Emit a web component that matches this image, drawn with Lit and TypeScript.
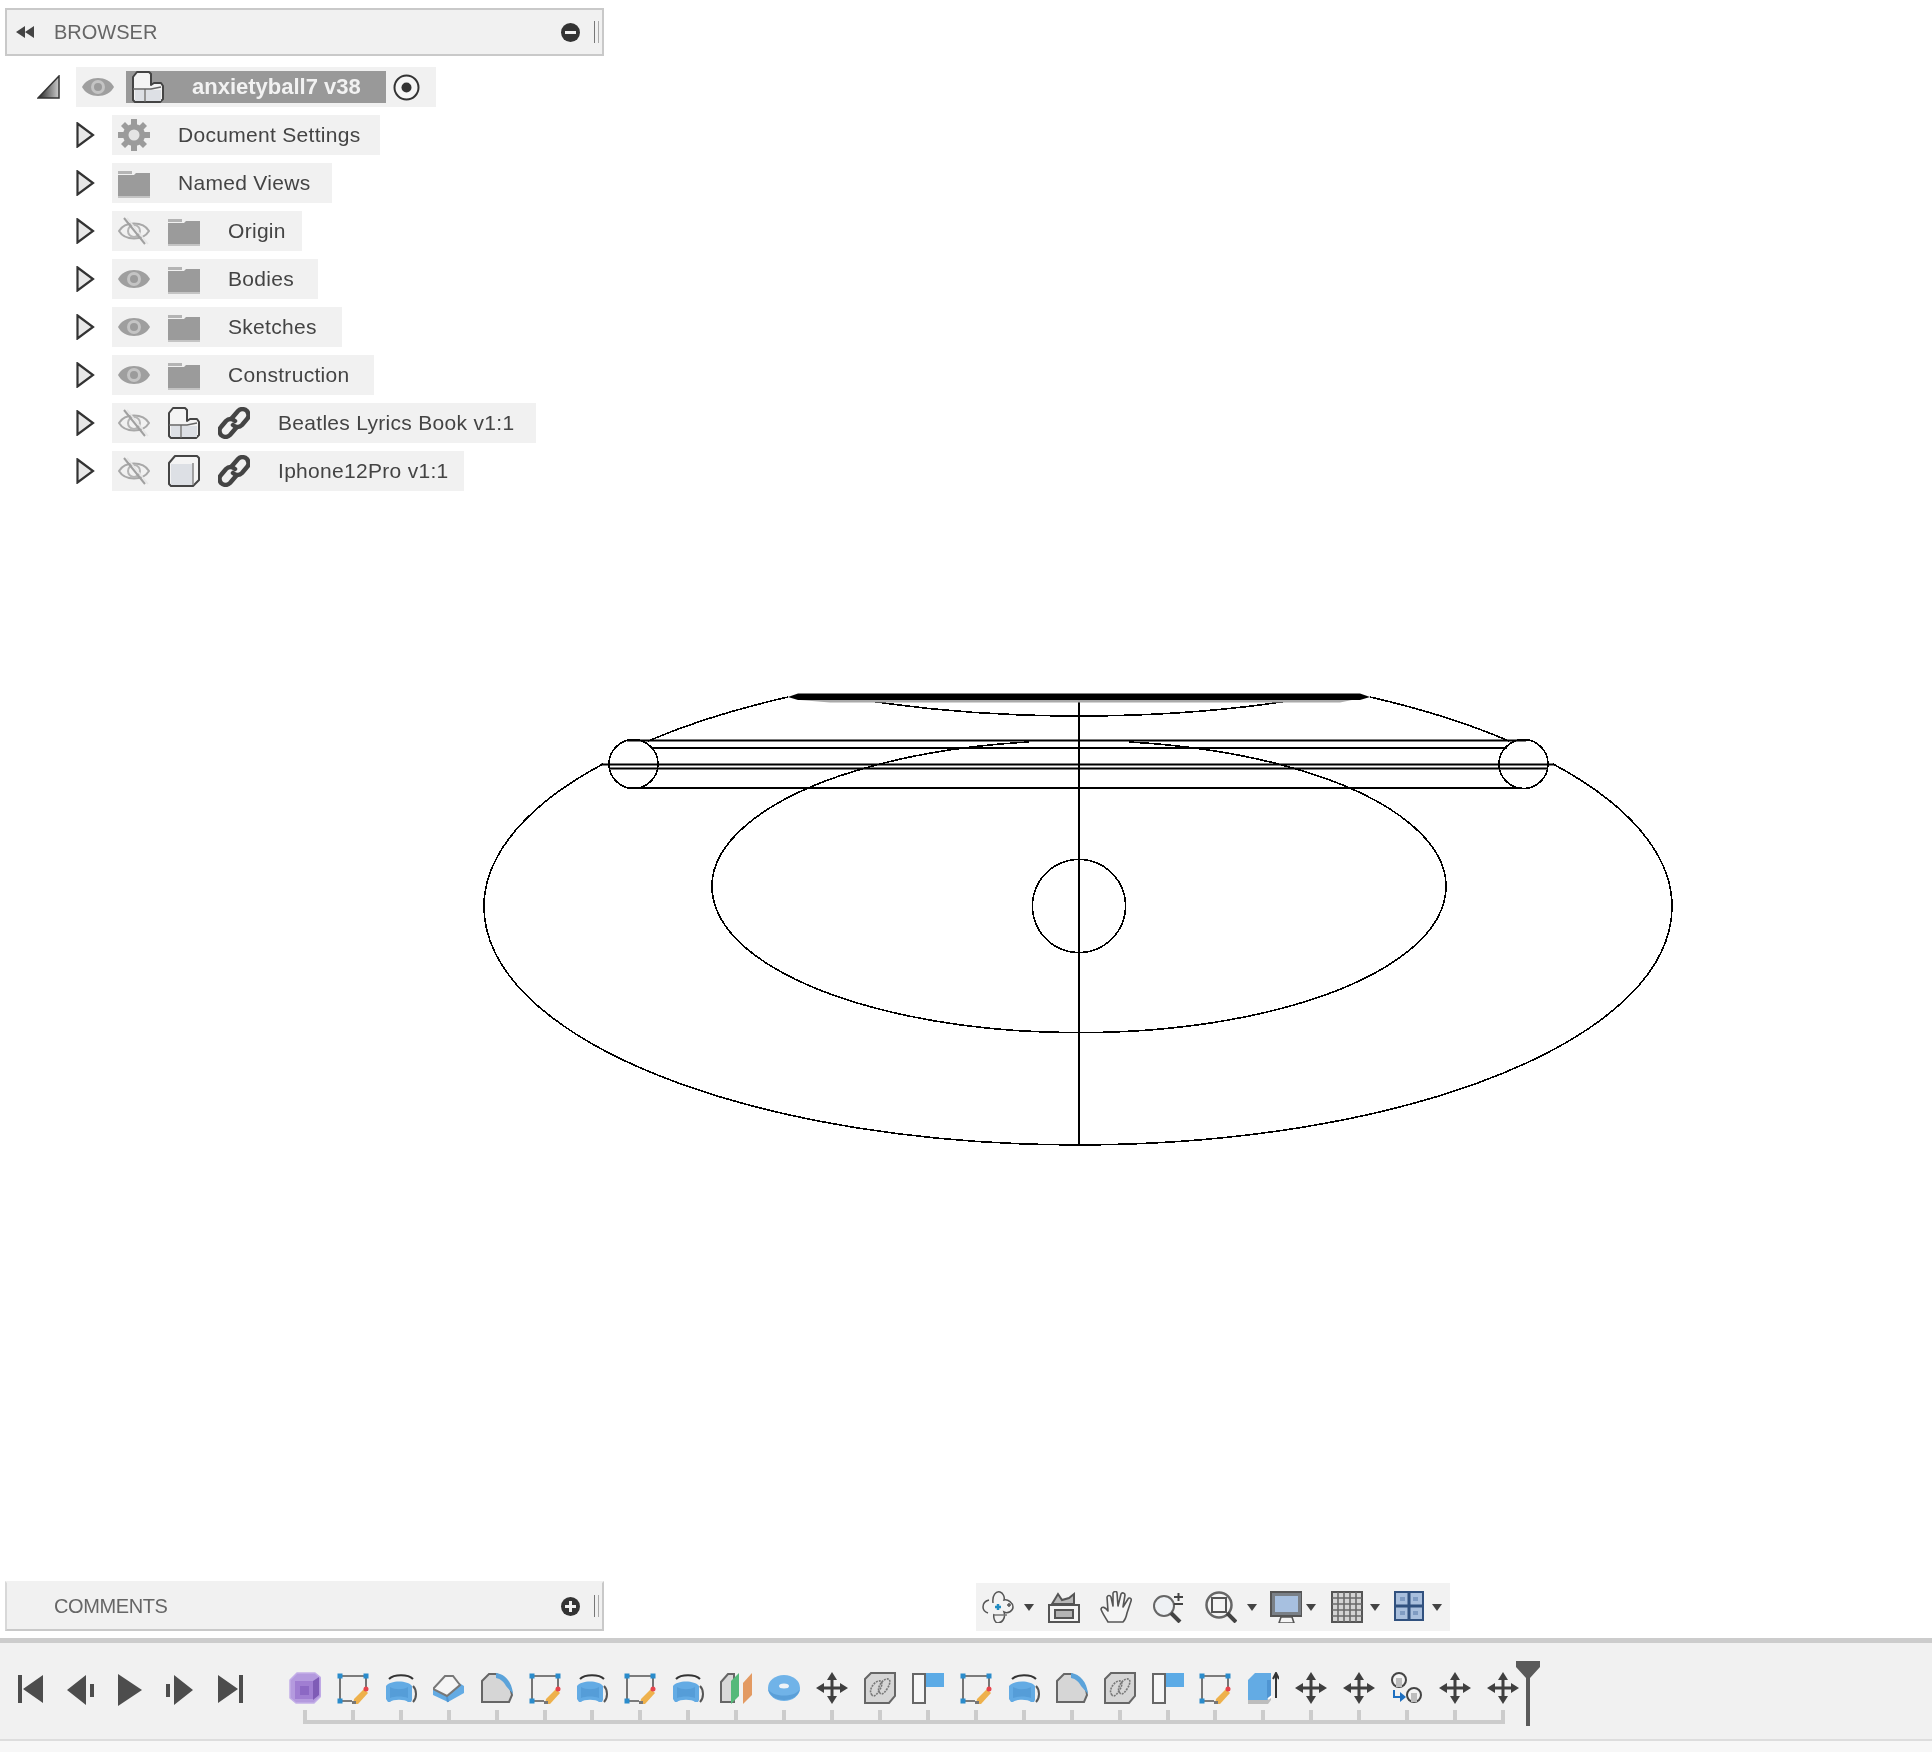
import { LitElement, css, html, svg } from "lit";
import { customElement } from "lit/decorators.js";

const icon = (body: unknown, w = 32, h = 32) =>
  html`<svg class="ico" width=${w} height=${h} viewBox="0 0 ${w} ${h}">${body}</svg>`;

const eye = svg`
  <path d="M0 16C6 4 26 4 32 16C26 28 6 28 0 16Z" fill="#9f9f9f"/>
  <circle cx="16" cy="16" r="7" fill="#c4c4c4"/>
  <circle cx="16" cy="16" r="4" fill="#9b9b9b"/>`;
const eyeOff = svg`
  <path d="M1 16C7 6 25 6 31 16C25 26 7 26 1 16Z" fill="none" stroke="#a8a8a8" stroke-width="2"/>
  <circle cx="16" cy="16" r="6" fill="none" stroke="#b4b4b4" stroke-width="2"/>
  <path d="M6 3L27 29" stroke="#a0a0a0" stroke-width="2"/>
  <path d="M9 3L30 29" stroke="#e6e6e6" stroke-width="1.5"/>`;
const folder = svg`
  <path d="M0 4H14V7H0Z" fill="#b4b4b4"/>
  <path d="M0 8H16L18 6H32V29H0Z" fill="#9b9b9b"/>
  <path d="M0 29H32V31H0Z" fill="#c4c4c4"/>`;
const gear = svg`
  <g fill="#9b9b9b">
    <circle cx="16" cy="16" r="11"/>
    <path d="M13 0H19V7H13ZM13 25H19V32H13ZM0 13H7V19H0ZM25 13H32V19H25Z"/>
    <path d="M3 7L7 3L12 8L8 12ZM25 3L29 7L24 12L20 8ZM3 25L8 20L12 24L7 29ZM24 20L29 25L25 29L20 24Z"/>
  </g>
  <circle cx="16" cy="16" r="5.500" fill="#e4e4e4"/>`;
const assembly = svg`
  <path d="M1 6L5 1H17L19 3V14L22 12H29L31 15V28L28 31H3L1 29Z" fill="#f4f4f4" stroke="#444" stroke-width="2" stroke-linejoin="round"/>
  <path d="M3 19H12V30H3ZM14 19H29V30H14Z" fill="#dde0e5"/>
  <path d="M1 18H19L29 16M13 18V31" fill="none" stroke="#666" stroke-width="1.300"/>`;
const body = svg`
  <path d="M1 8L7 1H29L31 3V25L25 31H3L1 29Z" fill="#f4f4f4" stroke="#444" stroke-width="2" stroke-linejoin="round"/>
  <path d="M3 9H25V30H3Z" fill="#dde0e5"/>
  <path d="M25 8V30" fill="none" stroke="#888" stroke-width="1.500"/>`;
const link = svg`
  <g fill="none" stroke="#444" stroke-width="4.500" stroke-linecap="round">
    <path d="M14 11L20 4C23 1 27 2 29 4C31 7 31 10 29 12L24 18C21 21 17 20 15 18"/>
    <path d="M18 21L12 28C9 31 5 30 3 28C1 25 1 22 3 20L8 14C11 11 15 12 17 14"/>
  </g>`;

const sketch = svg`
  <path d="M3 4H29V17M3 4V29H15" fill="none" stroke="#555" stroke-width="1.600"/>
  <path d="M0.500 1.500H5.500V6.500H0.500ZM26.500 1.500H31.500V6.500H26.500ZM0.500 26.500H5.500V31.500H0.500Z" fill="#2a8ccc"/>
  <path d="M27 17L31 21L21 32L16 32L17 27Z" fill="#eeb14c"/>
  <circle cx="29" cy="17" r="2.500" fill="#e8444c"/>
  <path d="M15 29H19V32H15Z" fill="#777"/>`;
const revolve = svg`
  <path d="M4 7C9 2 23 2 28 7" fill="none" stroke="#333" stroke-width="2"/>
  <path d="M1 14C5 8 23 8 27 14V28L26 30H23C20 27 8 27 5 30H3L1 27Z" fill="#63abe4"/>
  <path d="M5 15C10 18 18 18 23 15V26C18 24 10 24 5 26Z" fill="#559dd8"/>
  <path d="M28 14C32 18 32 26 28 30" fill="none" stroke="#555" stroke-width="2"/>`;
const shell = svg`
  <path d="M0 17L15 4L31 14V21L15 30L0 23Z" fill="#63abe4"/>
  <path d="M0 17L12 4H20L27 13L14 24Z" fill="#f5f5f5" stroke="#777" stroke-width="2"/>
  <path d="M14 25L15 30" stroke="#4f95d2" stroke-width="2"/>`;
const fillet = svg`
  <path d="M1 30V9L8 2H15C24 5 30 14 31 23L28 30Z" fill="#d6d6d6" stroke="#666" stroke-width="2"/>
  <path d="M15 1C24 2 31 10 32 22L25 14C23 10 20 7 15 6Z" fill="#5ba3da"/>`;
const combine = svg`
  <path d="M1 7L7 1H31V24L25 31H1Z" fill="#d6d6d6" stroke="#666" stroke-width="2"/>
  <g fill="none" stroke="#777" stroke-width="1.600" stroke-dasharray="2 1">
    <path d="M8 23C4 19 9 11 14 9C19 8 19 13 15 19C12 24 9 25 8 23Z"/>
    <path d="M16 21C12 17 17 9 22 7C27 6 27 11 23 17C20 22 17 23 16 21Z"/>
  </g>`;
const flag = svg`
  <path d="M1 2H13V31H1Z" fill="#f7f7f7" stroke="#666" stroke-width="2"/>
  <path d="M14 1H32V15H14Z" fill="#5cabe6"/>`;
const extrude = svg`
  <path d="M1 8L8 1H24V24L20 28H1Z" fill="#63abe4"/>
  <path d="M20 8H24V24L20 28Z" fill="#4f95d2"/>
  <path d="M1 28H20L24 25V28L21 32H1Z" fill="#bdbdbd"/>
  <path d="M21 27L25 24" stroke="#fff" stroke-width="2"/>
  <path d="M29 26V3M26 7L29 1L32 7" fill="none" stroke="#333" stroke-width="2"/>`;
const move = svg`
  <path d="M16 0L21 8H17.500V14.500H24V11L32 16L24 21V17.500H17.500V24H21L16 32L11 24H14.500V17.500H8V21L0 16L8 11V14.500H14.500V8H11Z" fill="#3f3f3f"/>`;
const purple = svg`
  <path d="M1 8L8 1H26L32 6V24L25 31H7L1 26Z" fill="#b49ade" stroke="#c3aee8" stroke-width="1.500" stroke-linejoin="round"/>
  <path d="M6 9H24V27H6Z" fill="#a07ed2"/>
  <path d="M11 14H20V23H11Z" fill="#8c68c4"/>
  <path d="M24 9L30 5V23L24 28Z" fill="#7f5cb6"/>`;
const split = svg`
  <path d="M1 30V10L8 2H14V30Z" fill="#d9d9d9" stroke="#666" stroke-width="2"/>
  <path d="M11 32V9L19 1V24Z" fill="#55b97a"/>
  <path d="M23 32V11L32 1V23Z" fill="#e39a62"/>`;
const torus = svg`
  <ellipse cx="16" cy="16" rx="16" ry="13" fill="#70b3e8"/>
  <path d="M0 16C2 26 30 26 32 16C31 32 1 32 0 16Z" fill="#5a9fd8"/>
  <ellipse cx="16" cy="14" rx="5" ry="2.500" fill="#eef3f7"/>`;
const jointOrigin = svg`
  <circle cx="8" cy="8" r="7" fill="#f4f4f4" stroke="#444" stroke-width="2"/>
  <rect x="5" y="6" width="6" height="9" fill="#bdbdbd"/>
  <circle cx="23" cy="23" r="7" fill="#f4f4f4" stroke="#444" stroke-width="2"/>
  <rect x="20" y="21" width="6" height="9" fill="#bdbdbd"/>
  <path d="M3 18V25H9" fill="none" stroke="#1d6fc0" stroke-width="2"/>
  <path d="M9 20L15 25L9 30Z" fill="#1d6fc0"/>`;

const orbit = svg`
  <path d="M7 9C3 10 1 13 1 16C1 19 3 21 6 22" fill="none" stroke="#555" stroke-width="1.500"/>
  <path d="M11 12C10 4 14 0 18 1C21 2 23 6 22 9C26 8 31 12 31 16C31 20 26 23 22 21C24 27 20 32 16 32C13 32 11 27 12 23" fill="none" stroke="#555" stroke-width="1.500"/>
  <path d="M13 16H19M16 13V19" stroke="#1f8ac0" stroke-width="2.500"/>
  <path d="M12 24H25" stroke="#777" stroke-width="1.500"/>
  <path d="M25 14H29M27 12V16" stroke="#555" stroke-width="1.500"/>`;
const lookAt = svg`
  <path d="M1 14H31V31H1Z" fill="#f5f5f5" stroke="#555" stroke-width="2"/>
  <path d="M7 19H25V27H7Z" fill="#b4b4b4" stroke="#555" stroke-width="2"/>
  <path d="M4 13L10 3L14 9L21 7L26 3V13Z" fill="#b8b8b8" stroke="#555" stroke-width="2"/>`;
const hand = svg`
  <path d="M8 31C5 26 1 20 1 18C2 15 5 16 8 20L7 6C8 4 10 4 11 6L13 15L13 2C14 0 17 0 17 2L18 15L21 3C22 1 25 2 25 4L23 16L28 8C29 6 32 7 31 10L27 22C26 27 25 29 23 31Z" fill="#f5f5f5" stroke="#555" stroke-width="1.600" stroke-linejoin="round"/>`;
const zoomPm = svg`
  <circle cx="12" cy="15" r="10" fill="#eef1f4" stroke="#666" stroke-width="2"/>
  <path d="M19 22L28 31" stroke="#444" stroke-width="4"/>
  <path d="M22 6H31M26.500 2V10M22 13H31" stroke="#444" stroke-width="2"/>`;
const zoomFit = svg`
  <circle cx="14" cy="14" r="12.500" fill="#f5f5f5" stroke="#666" stroke-width="2.500"/>
  <path d="M7 7H21V21H7Z" fill="#f5f5f5" stroke="#555" stroke-width="2"/>
  <path d="M22 22L31 31" stroke="#444" stroke-width="4"/>`;
const display = svg`
  <path d="M1 1H32V25H1Z" fill="#7a8087" stroke="#555" stroke-width="2"/>
  <path d="M5 5H28V21H5Z" fill="#a7c0e0"/>
  <path d="M9 32L11 26H22L24 32Z" fill="#f5f5f5" stroke="#555" stroke-width="1.600"/>`;
const grid = svg`
  <rect x="1" y="1" width="30" height="30" fill="#d4d4d4" stroke="#555" stroke-width="2"/>
  <path d="M7 1V31M13 1V31M19 1V31M25 1V31M1 7H31M1 13H31M1 19H31M1 25H31" stroke="#6a6a6a" stroke-width="1.600"/>`;
const panes = svg`
  <rect x="1" y="1" width="28" height="28" fill="#a9bfdd" stroke="#31517f" stroke-width="2"/>
  <path d="M15 1V29M1 15H29" stroke="#31517f" stroke-width="3"/>
  <path d="M6 6H11V10H6ZM19 6H24V10H19ZM6 20H11V24H6ZM19 20H24V24H19Z" fill="#7f9bc2"/>`;

const playFirst = svg`<path d="M0 1H4V29H0ZM25 1V29L5 15Z" fill="#4d4d4d"/>`;
const playPrev = svg`<path d="M19 1V31L0 16ZM23 10H27V23H23Z" fill="#4d4d4d"/>`;
const playRun = svg`<path d="M0 0L24 16L0 32Z" fill="#4d4d4d"/>`;
const playNext = svg`<path d="M8 1V31L27 16ZM0 10H4V23H0Z" fill="#4d4d4d"/>`;
const playLast = svg`<path d="M21 1H25V29H21ZM0 1V29L20 15Z" fill="#4d4d4d"/>`;

type Row = { label: string; icons: unknown[]; width: number };

const rows: Row[] = [
  { label: "Document Settings", icons: [gear], width: 268 },
  { label: "Named Views", icons: [folder], width: 220 },
  { label: "Origin", icons: [eyeOff, folder], width: 190 },
  { label: "Bodies", icons: [eye, folder], width: 206 },
  { label: "Sketches", icons: [eye, folder], width: 230 },
  { label: "Construction", icons: [eye, folder], width: 262 },
  { label: "Beatles Lyrics Book v1:1", icons: [eyeOff, assembly, link], width: 424 },
  { label: "Iphone12Pro v1:1", icons: [eyeOff, body, link], width: 352 },
];

const steps = [
  purple, sketch, revolve, shell, fillet, sketch, revolve, sketch, revolve, split,
  torus, move, combine, flag, sketch, revolve, fillet, combine, flag, sketch,
  extrude, move, move, jointOrigin, move, move,
];

const navTools = [
  { art: orbit, caret: true, cls: "t-orbit" },
  { art: lookAt, caret: false, cls: "t-look" },
  { art: hand, caret: false, cls: "t-hand" },
  { art: zoomPm, caret: false, cls: "t-pm" },
  { art: zoomFit, caret: true, cls: "t-fit" },
  { art: display, caret: true, cls: "t-display" },
  { art: grid, caret: true, cls: "t-grid" },
  { art: panes, caret: true, cls: "t-panes" },
];

@customElement("app-root")
export class AppRoot extends LitElement {
  private panelHead(title: string, sign: "minus" | "plus", collapse: boolean) {
    return html`
      <header class="panel">
        <span class="collapse">
          ${collapse
            ? html`<svg width="20" height="14" viewBox="0 0 20 14"><path d="M10 1V13L1 7ZM19 1V13L10 7Z" fill="#444"/></svg>`
            : null}
        </span>
        <span class="title">${title}</span>
        <svg class="sign" width="19" height="19" viewBox="0 0 19 19">
          <circle cx="9.500" cy="9.500" r="9.500" fill="#333"/>
          <path d=${sign === "minus" ? "M4 8H15V11H4Z" : "M4 8H8V4H11V8H15V11H11V15H8V11H4Z"} fill="#f1f1f1"/>
        </svg>
        <span class="grip"></span>
      </header>
    `;
  }

  private viewCanvas() {
    return html`
      <svg class="drawing" width="1932" height="1638" viewBox="0 0 1932 1638" fill="none" stroke="#000" stroke-width="1.600">
        <g class="jagged">
          <path d="M603 764A594 238 0 1 0 1553 764"/>
          <path d="M648 741A594 238 0 0 1 788 697"/>
          <path d="M1370 697A594 238 0 0 1 1509 741"/>
          <path d="M1029 742A367 146 0 1 0 1129 742"/>
          <path d="M845 697C920 710 1000 716 1079 716C1158 716 1238 710 1313 697"/>
          <circle cx="1079" cy="906" r="46.500"/>
          <circle cx="633.500" cy="764" r="24.500"/>
          <circle cx="1523.500" cy="764" r="24.500"/>
        </g>
        <path d="M627 740.500H1526M651 748H1507M601 764.500H1554M609 768.500H1548M630 788H1522M1079 697V1144" stroke-width="2"/>
        <path d="M800 700H1352L1340 702.500H830Z" fill="#aaa" stroke="none"/>
        <path d="M788 697L798 693.500H1360L1370 697L1360 700H798Z" fill="#000" stroke="none"/>
      </svg>
    `;
  }

  render() {
    return html`
      <section class="view">
        ${this.viewCanvas()}
        <div class="browser">
          ${this.panelHead("BROWSER", "minus", true)}
          <div class="tree">
            <div class="root">
              <svg class="open" width="23" height="24" viewBox="0 0 23 24">
                <defs>
                  <linearGradient id="tri" x1="0" x2="1">
                    <stop offset="0" stop-color="#222"/><stop offset="1" stop-color="#ccc"/>
                  </linearGradient>
                </defs>
                <path d="M22 1V23H1Z" fill="url(#tri)" stroke="#333" stroke-width="1.500"/>
              </svg>
              <div class="chip root-chip">
                ${icon(eye)}
                <div class="selected">${icon(assembly)}<span>anxietyball7 v38</span></div>
                <svg class="radio" width="27" height="27" viewBox="0 0 27 27">
                  <circle cx="13.500" cy="13.500" r="12" fill="#f5f5f5" stroke="#333" stroke-width="2"/>
                  <circle cx="13.500" cy="13.500" r="5" fill="#333"/>
                </svg>
              </div>
            </div>
            ${rows.map(
              (r) => html`
                <div class="node">
                  <svg class="closed" width="19" height="26" viewBox="0 0 19 26">
                    <path d="M1.500 1.500L17 13L1.500 24.500Z" fill="#e8e8e8" stroke="#333" stroke-width="2.200"/>
                  </svg>
                  <div class="chip" style="width:${r.width}px">
                    ${r.icons.map((i) => icon(i))}
                    <span class="label">${r.label}</span>
                  </div>
                </div>
              `,
            )}
          </div>
        </div>
        <div class="lower">
          <div class="comments">${this.panelHead("COMMENTS", "plus", false)}</div>
          <nav class="nav">
            ${navTools.map(
              (t) => html`
                <span class="tool ${t.cls}">
                  ${icon(t.art)}
                  ${t.caret ? html`<i class="caret"></i>` : null}
                </span>
              `,
            )}
          </nav>
        </div>
      </section>
      <section class="timeline">
        <div class="playback">
          ${[playFirst, playPrev, playRun, playNext, playLast].map(
            (p) => html`<span class="play">${icon(p, 28, 32)}</span>`,
          )}
        </div>
        <div class="track">
          <div class="steps">
            ${steps.map((s) => html`<div class="step">${icon(s)}<i class="tick"></i></div>`)}
          </div>
          <div class="rail"></div>
        </div>
        <svg class="playhead" width="26" height="65" viewBox="0 0 26 65">
          <path d="M1 0H25V6L15 17V65H11V17L1 6Z" fill="#5a5a5a"/>
        </svg>
      </section>
      <footer class="status"></footer>
    `;
  }

  static styles = css`
    :host {
      display: flex;
      flex-direction: column;
      height: 1752px;
      background: #fff;
      font-family: "Liberation Sans", Arial, sans-serif;
      overflow: hidden;
    }

    .ico {
      display: block;
      flex: none;
      filter: blur(0.3px);
    }

    .jagged {
      shape-rendering: crispEdges;
    }

    .view {
      position: relative;
      flex: 1;
      display: flex;
      flex-direction: column;
      justify-content: space-between;
      padding: 8px 0 7px 5px;
      min-height: 0;
    }

    .drawing {
      position: absolute;
      left: 0;
      top: 0;
    }

    .browser,
    .lower {
      position: relative;
    }

    .panel {
      box-sizing: border-box;
      width: 599px;
      height: 48px;
      display: flex;
      align-items: center;
      background: #f1f1f1;
      border: 2px solid #c9c9c9;
    }

    .collapse {
      width: 47px;
      flex: none;
      padding-left: 8px;
      box-sizing: border-box;
      display: flex;
    }

    .title {
      flex: 1;
      font-size: 20px;
      color: #666;
      filter: blur(0.3px);
    }

    .sign {
      flex: none;
    }

    .grip {
      width: 3px;
      height: 22px;
      margin: 0 3px 0 14px;
      border-left: 1px solid #777;
      border-right: 1px solid #aaa;
    }

    .comments .panel {
      height: 50px;
      border-top-color: #f1f1f1;
      border-left-color: #d8d8d8;
    }

    .comments .title {
      letter-spacing: -0.4px;
    }

    .tree {
      display: flex;
      flex-direction: column;
      gap: 8px;
      margin: 11px 0 0 32px;
    }

    .root,
    .node {
      display: flex;
      align-items: center;
      height: 40px;
    }

    .open {
      margin-right: 16px;
    }

    .closed {
      margin: 0 17px 0 39px;
    }

    .chip {
      box-sizing: border-box;
      height: 40px;
      display: flex;
      align-items: center;
      gap: 18px;
      padding-left: 6px;
      background: #f1f1f1;
    }

    .root-chip {
      width: 360px;
      gap: 0;
    }

    .root-chip > .ico {
      margin-right: 12px;
    }

    .selected {
      width: 260px;
      height: 32px;
      display: flex;
      align-items: center;
      gap: 28px;
      padding-left: 6px;
      box-sizing: border-box;
      background: #999;
      color: #f2f2f2;
      font-size: 22px;
      font-weight: 700;
      white-space: nowrap;
    }

    .selected span {
      filter: blur(0.3px);
    }

    .radio {
      margin-left: 7px;
    }

    .label {
      margin-left: 10px;
      font-size: 21px;
      letter-spacing: 0.3px;
      color: #444;
      white-space: nowrap;
      filter: blur(0.3px);
    }

    .lower {
      display: flex;
      align-items: flex-end;
    }

    .nav {
      display: flex;
      align-items: center;
      box-sizing: border-box;
      width: 474px;
      height: 48px;
      margin-left: 372px;
      padding-left: 6px;
      background: #f2f2f2;
    }

    .tool {
      display: flex;
      align-items: center;
    }

    .caret {
      width: 0;
      height: 0;
      margin-left: 10px;
      border: 5.5px solid transparent;
      border-top: 7px solid #444;
      border-bottom: 0;
    }

    .t-orbit {
      margin-right: 14px;
    }

    .t-look,
    .t-hand {
      margin-right: 20px;
    }

    .t-pm {
      margin-right: 21px;
    }

    .t-fit {
      margin-right: 13px;
    }

    .t-display {
      margin-right: 15px;
    }

    .t-grid {
      margin-right: 14px;
    }

    .t-display .caret {
      margin-left: 4px;
    }

    .t-grid .caret {
      margin-left: 7px;
    }

    .t-panes .caret {
      margin-left: 6px;
    }

    .timeline {
      position: relative;
      box-sizing: border-box;
      height: 103px;
      display: flex;
      padding: 29px 0 0 7px;
      background: #f1f1f1;
      border-top: 5px solid #ccc;
      border-bottom: 2px solid #ddd;
    }

    .playback {
      display: flex;
      width: 274px;
      height: 32px;
      margin-top: 2px;
    }

    .play {
      width: 50px;
      display: flex;
      justify-content: center;
    }

    .play:nth-child(2) .ico {
      margin-left: -3px;
    }

    .play:nth-child(4) .ico {
      margin-left: -5px;
    }

    .steps {
      display: flex;
    }

    .step {
      width: 47.93px;
      display: flex;
      flex-direction: column;
      align-items: center;
    }

    .tick {
      width: 4px;
      height: 10px;
      margin-top: 6px;
      background: #ccc;
    }

    .rail {
      width: 1202px;
      height: 4px;
      margin-left: 22px;
      background: #ccc;
    }

    .playhead {
      position: absolute;
      left: 1515px;
      top: 18px;
    }

    .status {
      flex: none;
      height: 11px;
      background: #f7f7f7;
    }
  `;
}
